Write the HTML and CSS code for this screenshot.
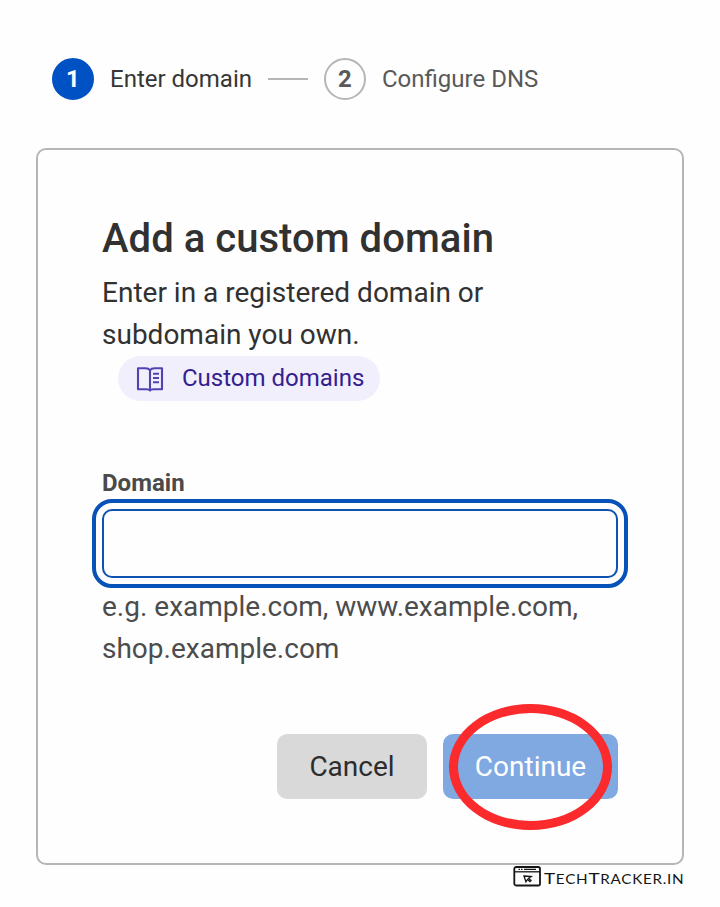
FILE: index.html
```html
<!DOCTYPE html>
<html lang="en">
<head>
<meta charset="utf-8">
<title>Add a custom domain</title>
<link rel="stylesheet" href="styles.css">
</head>
<body>
<ol class="steps">
  <li class="step active"><span class="badge">1</span><span>Enter domain</span></li>
  <li class="divider"></li>
  <li class="step"><span class="badge">2</span><span>Configure DNS</span></li>
</ol>
<main class="card">
  <h1>Add a custom domain</h1>
  <p class="intro">Enter in a registered domain or subdomain you own.</p>
  <a class="docs">
    <svg width="28" height="28" viewBox="0 0 28 28" fill="none" stroke="#5144b2" stroke-width="2.1" stroke-linejoin="round">
      <path d="M14 5.2C13 3.6 11.5 3.2 9.5 3.2H2V24.3H10.5Q13.3 24.3 14 25.5Q14.7 24.3 17.5 24.3H26V3.2H18.5C16.5 3.2 15 3.6 14 5.2V25.5"/>
      <path d="M17 8.7H23M17 13H23M17 17.2H23"/>
    </svg>
    <span>Custom domains</span>
  </a>
  <label for="domain">Domain</label>
  <input id="domain" type="text">
  <p class="hint">e.g. example.com, www.example.com, shop.example.com</p>
  <div class="actions">
    <button class="cancel">Cancel</button>
    <button class="continue">Continue<span class="ring"></span></button>
  </div>
</main>
<footer>
  <svg width="172" height="22" viewBox="0 0 172 22">
    <rect x="1.3" y="1" width="25.7" height="18.5" rx="1.8" fill="none" stroke="#151515" stroke-width="1.8"/>
    <path d="M1.3 5.8H27" stroke="#151515" stroke-width="1.3"/>
    <path d="M5.5 3.4H7M8 3.4H9.5M11 3.4H23" stroke="#151515" stroke-width="1.1"/>
    <path d="M11 10L18.2 10.6L15.6 12.3L18 14.6L17 15.6L14.5 13.4L12.9 15.8Z" fill="none" stroke="#151515" stroke-width="1.3"/>
    <g transform="translate(31 18.2) scale(1.22 1)">
      <text x="0" y="0" textLength="114.5" lengthAdjust="spacing" class="brand"><tspan class="cap">T</tspan>ECH<tspan class="cap">T</tspan>RACKER.IN</text>
    </g>
  </svg>
</footer>
</body>
</html>
```
FILE: styles.css
```css
* { box-sizing: border-box; }
body {
  margin: 0;
  padding: 58px 36px 0;
  background: #fefefe;
  color: #313131;
  font-family: Roboto, sans-serif;
  font-size: 28px;
  line-height: 42px;
}
h1, p, ol { margin: 0; padding: 0; }
.steps {
  display: flex;
  align-items: center;
  gap: 16px;
  padding-left: 16px;
  list-style: none;
  font-size: 24px;
}
.step { display: flex; gap: 16px; color: #595959; white-space: nowrap; }
.step.active { color: #363636; }
.badge {
  width: 42px;
  height: 42px;
  border: 2px solid #b6b6b6;
  border-radius: 50%;
  line-height: 38px;
  text-align: center;
  font-weight: 700;
}
.active .badge { background: #0051c3; border-color: #0051c3; color: #fff; }
.divider { width: 40px; height: 2px; background: #b6b6b6; }
.card {
  display: flex;
  flex-direction: column;
  height: 717px;
  margin-top: 48px;
  padding: 64px;
  border: 2px solid #b6b6b6;
  border-radius: 10px;
}
h1 { font-size: 40px; font-weight: 500; line-height: 50px; letter-spacing: 0.04px; }
.intro { margin-top: 8px; }
.docs {
  display: flex;
  align-items: center;
  align-self: flex-start;
  gap: 18px;
  height: 45px;
  margin: 0 0 64px 16px;
  padding: 0 16px 0 18px;
  border-radius: 23px;
  background: #f2effc;
  color: #32208f;
  font-size: 24px;
}
.docs span { padding-bottom: 2px; }
label { margin-bottom: 8px; color: #4a4a4a; font-size: 24px; font-weight: 700; line-height: 36px; }
input {
  width: 516px;
  height: 69px;
  padding: 0 16px;
  border: 2px solid #0d51b3;
  border-radius: 10px;
  outline: 4px solid #0752b8;
  outline-offset: 6px;
  background: #fefefe;
  font: inherit;
}
.hint { margin-top: 8px; color: #4c4c4c; }
.actions { display: flex; justify-content: flex-end; gap: 16px; margin-top: 64px; }
button {
  height: 65px;
  padding: 0;
  border: 0;
  border-radius: 10px;
  font: inherit;
}
.cancel { width: 150px; background: #d9d9d9; color: #2d2d2d; }
.continue { position: relative; width: 175px; background: #80a8e1; color: #fff; }
.ring {
  position: absolute;
  left: 6px;
  top: -30px;
  width: 163px;
  height: 126px;
  border: 9px solid #fa2a2d;
  border-radius: 50%;
}
footer { display: flex; justify-content: flex-end; padding-top: 1px; margin-right: -1px; }
.brand { font-family: Lato, sans-serif; font-size: 12.5px; fill: #151515; }
.cap { font-size: 15.5px; }
```
